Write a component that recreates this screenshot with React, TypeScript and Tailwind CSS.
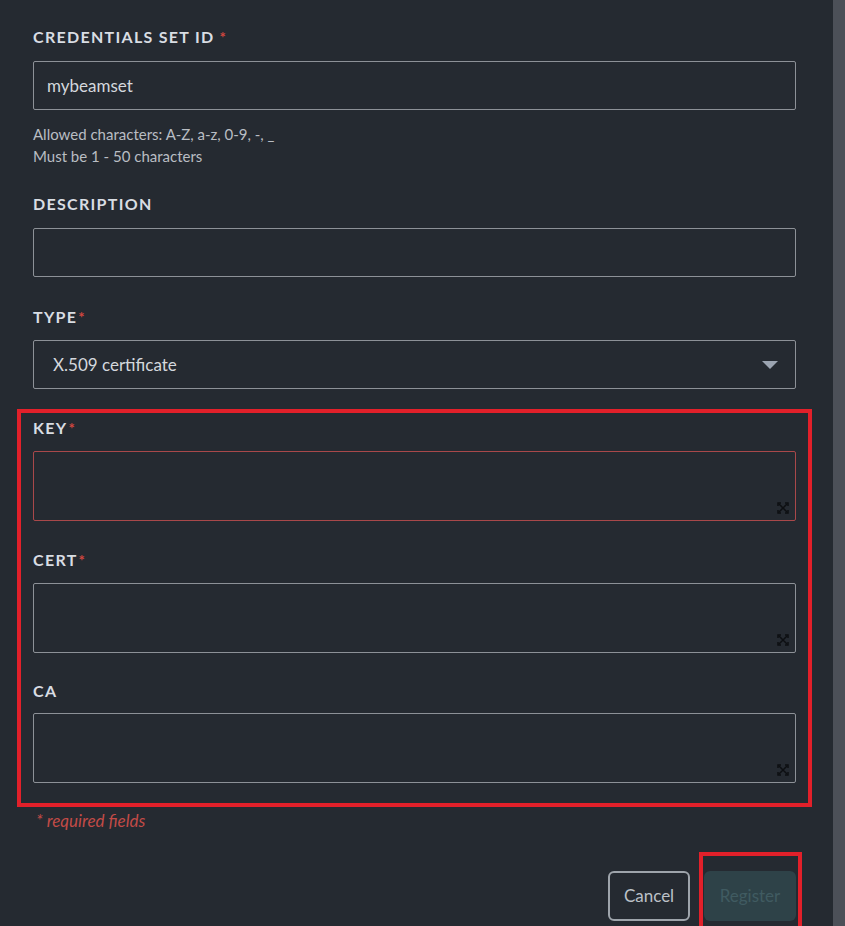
import React from "react";

const font = { fontFamily: "Lato, 'Noto Sans', sans-serif" };

// small four-corner expand glyph sitting in the textarea corner
const ExpandIcon = () => (
  <svg
    width="12"
    height="12"
    viewBox="0 0 12 12"
    className="absolute right-[6px] bottom-[6px]"
    fill="none"
    stroke="#0d0f12"
    strokeWidth="1.5"
  >
    <path d="M2 2l8 8M10 2l-8 8" />
    <path d="M1 4V1h3M8 1h3v3M11 8v3H8M4 11H1V8" />
  </svg>
);

interface FieldLabelProps {
  text: string;
  required?: boolean;
  spaced?: boolean;
  gap?: string;
}

const FieldLabel: React.FC<FieldLabelProps> = ({ text, required, spaced, gap = "mb-[13px]" }) => (
  <div className={`h-5 leading-5 text-[16px] font-bold tracking-[1.3px] text-[#d9dde3] ${gap}`}>
    {text}
    {required && (
      <span
        className={`text-[#d2463f] text-[15px] align-top ${spaced ? "ml-[5px]" : "ml-[1px]"}`}
      >
        *
      </span>
    )}
  </div>
);

const TextBox: React.FC<{ error?: boolean }> = ({ error }) => (
  <div
    className={`relative h-[70px] rounded-[2px] border ${
      error ? "border-[#a9484a]" : "border-[#8d9197]"
    }`}
  >
    <ExpandIcon />
  </div>
);

export default function App() {
  return (
    <div className="flex min-h-[926px] bg-[#252a31]" style={font}>
      <div className="flex-1 pl-[33px] pr-[37px] pt-[27px]">
        {/* id */}
        <FieldLabel text="CREDENTIALS SET ID" required spaced gap="mb-[14px]" />
        <div className="h-[49px] rounded-[2px] border border-[#8d9197] flex items-center px-[13px] text-[17px] text-[#d4d8dd]">
          mybeamset
        </div>
        <div className="mt-[13px] text-[15px] leading-[22px] text-[#b9bdc3]">
          <div>Allowed characters: A-Z, a-z, 0-9, -, _</div>
          <div>Must be 1 - 50 characters</div>
        </div>

        {/* description */}
        <div className="mt-[27px]">
          <FieldLabel text="DESCRIPTION" gap="mb-[14px]" />
          <div className="h-[49px] rounded-[2px] border border-[#8d9197]" />
        </div>

        {/* type */}
        <div className="mt-[30px]">
          <FieldLabel text="TYPE" required />
          <div className="h-[49px] rounded-[2px] border border-[#8d9197] flex items-center justify-between pl-[19px] pr-[17px] text-[17px] text-[#d4d8dd]">
            <span>X.509 certificate</span>
            <svg width="16" height="8" viewBox="0 0 16 8">
              <path d="M0 0h16L8 8z" fill="#9ba4b1" />
            </svg>
          </div>
        </div>

        {/* key material */}
        <div className="mt-[20px] -mx-4 border-4 border-[#e2202a] px-3 pt-[5px] pb-[20px]">
          <FieldLabel text="KEY" required />
          <TextBox error />
          <div className="mt-[29px]">
            <FieldLabel text="CERT" required />
            <TextBox />
          </div>
          <div className="mt-[28px]">
            <FieldLabel text="CA" gap="mb-[12px]" />
            <TextBox />
          </div>
        </div>

        <div className="mt-[4px] ml-[3px] h-5 leading-5 text-[17px] italic text-[#c24b47]">
          * required fields
        </div>

        <div className="mt-[21px] flex justify-end items-start gap-[9px] -mr-[6px]">
          <button className="mt-[19px] h-[50px] w-[82px] rounded-[6px] border-2 border-[#9ea4ab] text-[17px] text-[#bcc1c8]">
            Cancel
          </button>
          <div className="border-4 border-[#e2202a] pt-[15px] pb-[15px] pl-[1px] pr-[2px]">
            <button className="h-[50px] w-[92px] rounded-[6px] bg-[#2e4248] text-[17px] text-[#405b61]">
              Register
            </button>
          </div>
        </div>
      </div>
      <div className="w-[12px] bg-[#4c5058]" />
    </div>
  );
}
